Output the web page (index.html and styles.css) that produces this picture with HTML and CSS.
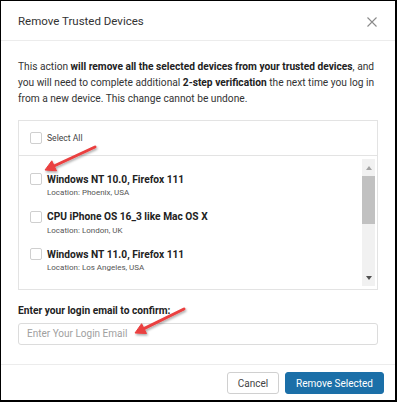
FILE: index.html
```html
<!DOCTYPE html>
<html>
<head>
<meta charset="utf-8">
<link rel="stylesheet" href="styles.css">
</head>
<body>
<div class="modal">
  <div class="modal-header">
    <div class="modal-title">Remove Trusted Devices</div>
    <svg class="close" width="10" height="10" viewBox="0 0 10 10"><path d="M0.5 0.5L9.5 9.5M9.5 0.5L0.5 9.5" stroke="#8a8a8a" stroke-width="1.1" fill="none"/></svg>
  </div>
  <div class="modal-body">
    <p class="intro">This action <b>will remove all the selected devices from your trusted devices</b>, and you will need to complete additional <b>2-step verification</b> the next time you log in from a new device. This change cannot be undone.</p>
    <div class="device-box">
      <div class="select-all"><span class="cb"></span><span>Select All</span></div>
      <div class="scroll-area">
        <div class="device-list">
          <div class="device">
            <div class="device-row"><span class="cb"></span><span class="device-name">Windows NT 10.0, Firefox 111</span></div>
            <div class="device-loc">Location: Phoenix, USA</div>
          </div>
          <div class="device">
            <div class="device-row"><span class="cb"></span><span class="device-name">CPU iPhone OS 16_3 like Mac OS X</span></div>
            <div class="device-loc">Location: London, UK</div>
          </div>
          <div class="device">
            <div class="device-row"><span class="cb"></span><span class="device-name">Windows NT 11.0, Firefox 111</span></div>
            <div class="device-loc">Location: Los Angeles, USA</div>
          </div>
        </div>
        <div class="scrollbar">
          <div class="sb-arrow up"></div>
          <div class="sb-thumb"></div>
          <div class="sb-arrow down"></div>
        </div>
      </div>
    </div>
    <label class="email-label">Enter your login email to confirm:</label>
    <div class="email-input">Enter Your Login Email</div>
  </div>
  <div class="modal-footer">
    <button class="btn btn-cancel">Cancel</button>
    <button class="btn btn-primary">Remove Selected</button>
  </div>
  <svg class="arrows" width="397" height="402" viewBox="0 0 397 402">
    <defs>
      <filter id="sh" x="-20%" y="-20%" width="140%" height="140%">
        <feDropShadow dx="1" dy="1.5" stdDeviation="1.2" flood-color="#000" flood-opacity="0.35"/>
      </filter>
    </defs>
    <g filter="url(#sh)" fill="#ea3f3f" stroke="#ea3f3f">
      <line x1="95" y1="147" x2="54" y2="166" stroke-width="3" stroke-linecap="round"/>
      <polygon points="45,170 56.5,170.8 51.8,160.8" stroke-width="1" stroke-linejoin="round"/>
      <line x1="184" y1="309" x2="144" y2="328.6" stroke-width="3" stroke-linecap="round"/>
      <polygon points="135,333 146.5,333.5 141.6,323.7" stroke-width="1" stroke-linejoin="round"/>
    </g>
  </svg>
</div>
</body>
</html>
```
FILE: styles.css
```css
html, body {
  margin: 0;
  padding: 0;
  background: #fff;
}
.modal {
  position: relative;
  width: 397px;
  height: 402px;
  box-sizing: border-box;
  border: 1px solid #000;
  border-right-width: 2px;
  border-bottom-width: 2px;
  background: #fff;
  display: flex;
  flex-direction: column;
  font-family: Roboto, "Liberation Sans", sans-serif;
  color: #333;
}
.modal-header {
  height: 39px;
  border-bottom: 1px solid #ececec;
  display: flex;
  align-items: center;
  justify-content: space-between;
  padding: 0 18px 0 17px;
}
.modal-title {
  font-size: 11.5px;
  color: #333;
}
.close {
  display: block;
  margin-top: 2px;
}
.modal-body {
  flex: 1;
  padding: 18px 17px 0 17px;
}
.intro {
  margin: 0;
  font-size: 10.2px;
  line-height: 16px;
  color: #333;
}
.intro b {
  font-weight: 700;
  color: #222;
}
.device-box {
  margin-top: 13px;
  height: 170px;
  box-sizing: border-box;
  border: 1px solid #e3e3e3;
  display: flex;
  flex-direction: column;
}
.cb {
  display: inline-block;
  width: 10px;
  height: 10px;
  border: 1px solid #cfcfcf;
  border-radius: 2px;
  background: #fff;
  flex: none;
}
.select-all {
  height: 35px;
  border-bottom: 1px solid #e3e3e3;
  display: flex;
  align-items: center;
  gap: 5px;
  padding-left: 11px;
  font-size: 8.6px;
  color: #444;
  box-sizing: border-box;
}
.scroll-area {
  flex: 1;
  display: flex;
  padding: 3px 2px 3px 0;
}
.device-list {
  flex: 1;
  padding: 12px 0 0 11px;
  display: flex;
  flex-direction: column;
  gap: 9.5px;
}
.device-row {
  display: flex;
  align-items: center;
  gap: 5px;
  height: 16px;
}
.device-name {
  font-size: 10.2px;
  font-weight: 700;
  color: #222;
}
.device-loc {
  font-size: 8px;
  line-height: 12px;
  color: #555;
  padding-left: 17px;
}
.scrollbar {
  width: 13px;
  background: #f1f1f1;
  display: flex;
  flex-direction: column;
  align-items: center;
}
.sb-arrow {
  height: 17px;
  width: 13px;
  display: flex;
  align-items: center;
  justify-content: center;
}
.sb-arrow::before {
  content: "";
  width: 0;
  height: 0;
  border-left: 3.5px solid transparent;
  border-right: 3.5px solid transparent;
}
.sb-arrow.up::before {
  border-bottom: 4px solid #a3a3a3;
}
.sb-arrow.down {
  margin-top: auto;
}
.sb-arrow.down::before {
  border-top: 4px solid #505050;
}
.sb-thumb {
  width: 13px;
  height: 48px;
  background: #c1c1c1;
}
.email-label {
  display: block;
  margin-top: 14px;
  font-size: 10.2px;
  line-height: 14px;
  font-weight: 700;
  color: #222;
}
.email-input {
  margin-top: 5px;
  height: 22px;
  box-sizing: border-box;
  border: 1px solid #dcdcdc;
  border-radius: 3px;
  padding-left: 8px;
  font-size: 10px;
  line-height: 20px;
  color: #a0a0a0;
}
.modal-footer {
  height: 36px;
  box-sizing: border-box;
  border-top: 1px solid #ececec;
  display: flex;
  justify-content: flex-end;
  align-items: flex-start;
  gap: 6px;
  padding: 7px 11px 0 0;
}
.btn {
  height: 22px;
  font-family: Roboto, "Liberation Sans", sans-serif;
  font-size: 10px;
  border-radius: 3px;
  padding: 0;
  margin: 0;
  white-space: nowrap;
  text-align: center;
  box-sizing: border-box;
}
.btn-cancel {
  width: 52px;
  background: #fff;
  border: 1px solid #d0d0d0;
  color: #444;
}
.btn-primary {
  width: 99px;
  background: #1b6fa8;
  border: 1px solid #1b6fa8;
  color: #fff;
}
.arrows {
  position: absolute;
  left: -1px;
  top: -1px;
  pointer-events: none;
}
```
